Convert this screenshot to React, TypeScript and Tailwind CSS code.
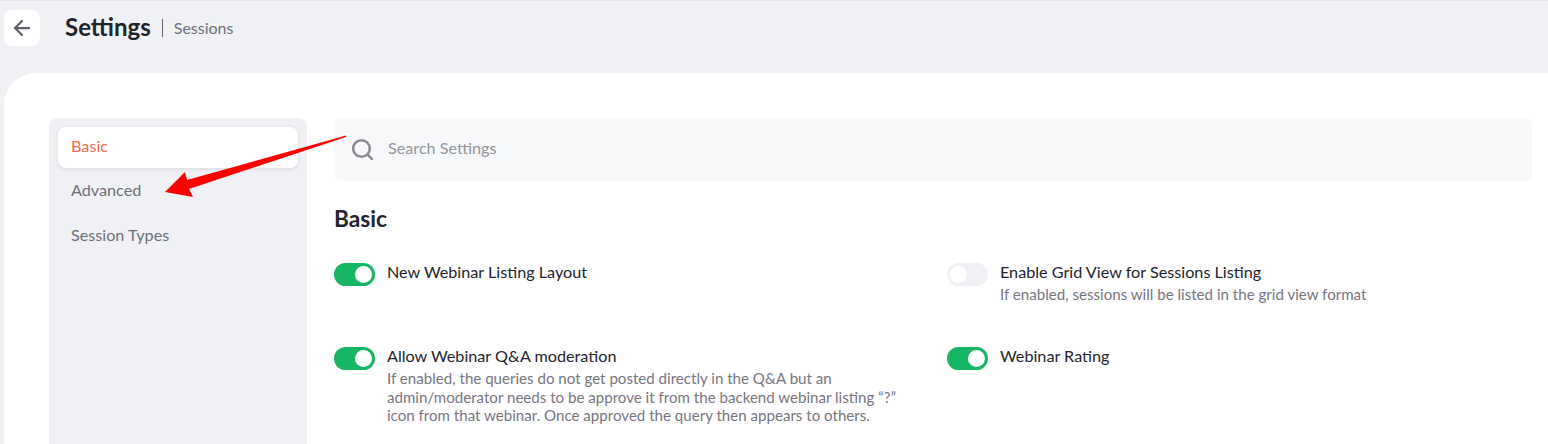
import { ArrowLeft, Search } from "lucide-react";

function Toggle({ on }: { on: boolean }) {
  return (
    <span
      className={`flex h-[23px] w-[41px] shrink-0 items-center rounded-full px-[3px] ${
        on ? "justify-end bg-[#17b667]" : "justify-start bg-[#f0f1f5]"
      }`}
    >
      <span className="h-[17px] w-[17px] rounded-full bg-white" />
    </span>
  );
}

function Setting({
  on,
  title,
  children,
}: {
  on: boolean;
  title: string;
  children?: React.ReactNode;
}) {
  return (
    <div className="flex gap-3">
      <Toggle on={on} />
      <div className="min-w-0 flex-1">
        <div className="text-[16.2px] leading-[17px] text-[#24242c]">{title}</div>
        {children && (
          <p className="mt-[5px] text-[15.1px] leading-[18.5px] text-[#77767f]">{children}</p>
        )}
      </div>
    </div>
  );
}

function Arrow() {
  return (
    <svg
      aria-hidden
      className="pointer-events-none absolute left-[160px] top-[130px]"
      width="192"
      height="72"
      viewBox="160 130 192 72"
    >
      <polygon points="346,134.5 187,179 185,171 165,191 193,196 189,188 346,136" fill="#fe0000" />
    </svg>
  );
}

export default function App() {
  return (
    <div className="relative h-[444px] w-[1548px] overflow-hidden border-t border-[#e6e7ec] bg-[#f0f1f5] font-['Lato','Noto_Sans',sans-serif]">
      <header className="flex h-[72px] items-start pl-1 pt-[9px]">
        <button className="flex h-9 w-9 items-center justify-center rounded-lg bg-white text-[#64606a]">
          <ArrowLeft size={24} strokeWidth={2.25} />
        </button>
        <h1 className="ml-[25px] mt-[1px] text-[24px] font-bold leading-8 text-[#24242c]">Settings</h1>
        <span className="ml-[11px] mt-[9px] h-[18px] w-px bg-[#64606a]" />
        <span className="ml-[11px] mt-[8px] text-[16px] leading-5 text-[#6f6e78]">Sessions</span>
      </header>

      <main className="ml-1 flex h-[371px] gap-[27px] rounded-tl-[32px] bg-white pl-[45px] pr-4 pt-[45px]">
        <aside className="h-[400px] w-[258px] shrink-0 rounded-lg bg-[#f0f1f5] p-[9px]">
          <div className="flex h-[41px] items-center rounded-lg bg-white px-[13px] pb-[3px] text-[16.2px] text-[#f4694a] shadow-[0_1px_4px_rgba(30,30,50,0.12)]">
            Basic
          </div>
          <div className="flex h-[45px] items-center px-[13px] text-[16.2px] text-[#6f6e78]">Advanced</div>
          <div className="flex h-[45px] items-center px-[13px] text-[16.2px] text-[#6f6e78]">Session Types</div>
        </aside>

        <section className="min-w-0 flex-1">
          <div className="flex h-[63px] items-center gap-[13px] rounded-lg bg-[#f7f8fa] px-[16px] pb-[3px]">
            <Search size={25} strokeWidth={2.4} className="mt-[3px] text-[#8b8b90]" />
            <span className="text-[16.2px] text-[#95959c]">Search Settings</span>
          </div>
          <h2 className="mt-[24px] text-[22.7px] font-bold leading-7 text-[#24242c]">Basic</h2>
          <div className="mt-[30px] grid grid-cols-[613px_1fr]">
            <div className="h-[84px] pr-[92px]">
              <Setting on title="New Webinar Listing Layout" />
            </div>
            <div className="h-[84px]">
              <Setting on={false} title="Enable Grid View for Sessions Listing">
                If enabled, sessions will be listed in the grid view format
              </Setting>
            </div>
            <div className="pr-[40px]">
              <Setting on title="Allow Webinar Q&A moderation">
                If enabled, the queries do not get posted directly in the Q&A but an admin/moderator needs to be approve it from the backend webinar listing “?” icon from that webinar. Once approved the query then appears to others.
              </Setting>
            </div>
            <div>
              <Setting on title="Webinar Rating" />
            </div>
          </div>
        </section>
      </main>
      <Arrow />
    </div>
  );
}
